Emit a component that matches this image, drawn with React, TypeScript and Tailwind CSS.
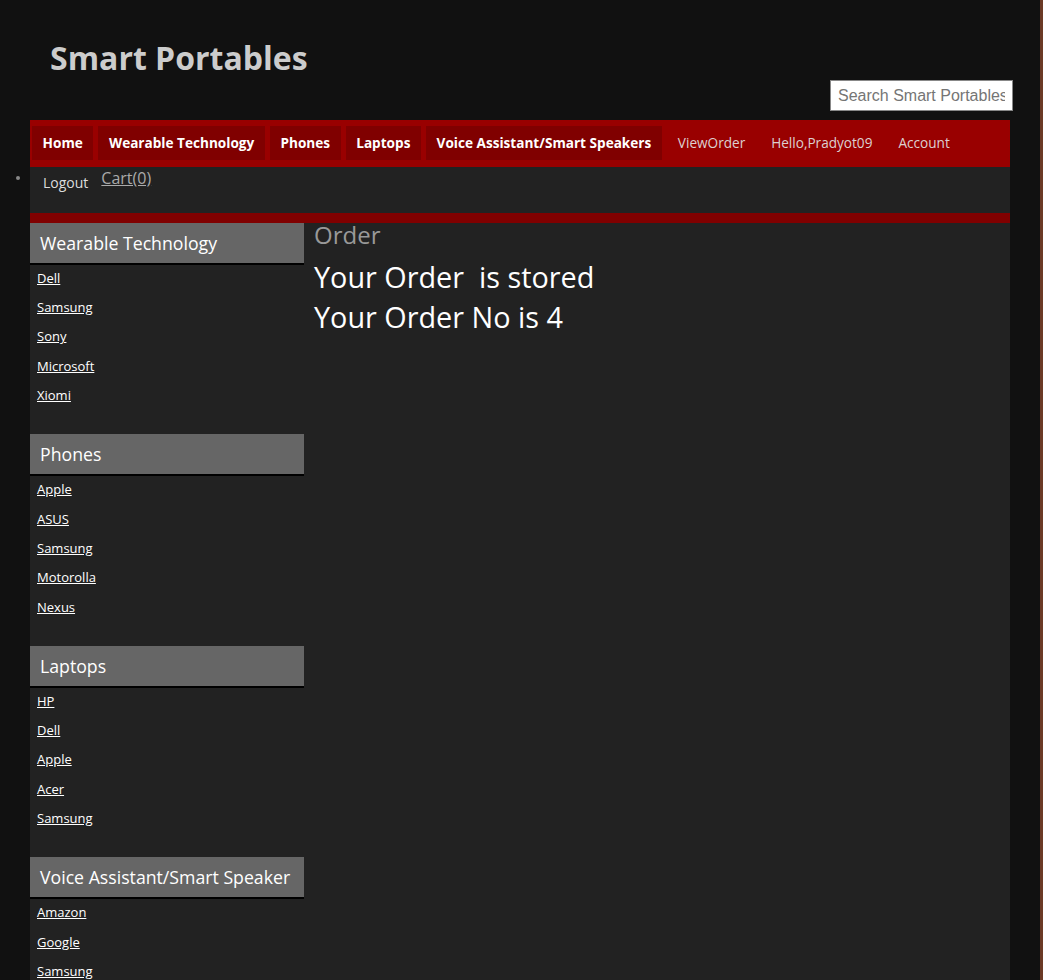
const font = { fontFamily: '"Open Sans", "Noto Sans", sans-serif' }

const navBold = ['Home', 'Wearable Technology', 'Phones', 'Laptops', 'Voice Assistant/Smart Speakers']
const navPlain = ['ViewOrder', 'Hello,Pradyot09', 'Account']

const sections = [
  { title: 'Wearable Technology', links: ['Dell', 'Samsung', 'Sony', 'Microsoft', 'Xiomi'] },
  { title: 'Phones', links: ['Apple', 'ASUS', 'Samsung', 'Motorolla', 'Nexus'] },
  { title: 'Laptops', links: ['HP', 'Dell', 'Apple', 'Acer', 'Samsung'] },
  { title: 'Voice Assistant/Smart Speaker', links: ['Amazon', 'Google', 'Samsung'] },
]

export default function App() {
  return (
    <div className="h-[980px] overflow-hidden bg-[#111111] flex" style={font}>
      <div className="flex-1 relative">
        <header className="h-[120px] relative">
          <h1 className="absolute left-[50px] top-[36px] text-[32px] font-bold text-[#cccccc] leading-[44px]">
            Smart Portables
          </h1>
          <input
            type="text"
            placeholder="Search Smart Portables"
            className="absolute left-[830px] top-[80px] w-[183px] h-[31px] bg-white border border-[#888] px-[7px] text-[16px] text-[#555] placeholder:text-[#757575] outline-none"
            style={{ fontFamily: '"Liberation Sans", Arial, sans-serif' }}
          />
        </header>

        <div className="ml-[30px] w-[980px] bg-[#222222] h-[860px]">
          <nav className="h-[47px] bg-[#990000] flex items-start pt-[6px] pl-[2px] gap-[5px]">
            {navBold.map((n) => (
              <a
                key={n}
                className="h-[34px] px-[10.6px] flex items-center bg-[#800000] text-white text-[13.6px] font-bold"
              >
                {n}
              </a>
            ))}
            <div className="flex -ml-[2px]">
              {navPlain.map((n) => (
                <a key={n} className="h-[34px] px-[13px] flex items-center text-[#ddd0d0] text-[13.6px]">
                  {n}
                </a>
              ))}
            </div>
          </nav>

          <div className="h-[46px] relative flex items-start">
            <span className="absolute -left-[14px] top-[9px] w-[4px] h-[4px] rounded-full bg-[#888]" />
            <span className="ml-[13px] mt-[3px] text-[14px] text-[#dddddd] leading-[20px] pt-[3px]">Logout</span>
            <a className="ml-[13px] mt-0 text-[16px] text-[#aaaaaa] underline leading-[22px]">Cart(0)</a>
          </div>

          <div className="h-[10px] bg-[#800000]" />

          <div className="flex">
            <aside className="w-[274px] shrink-0">
              {sections.map((s) => (
                <div key={s.title} className="mb-[13px]">
                  <h2 className="h-[40px] bg-[#666666] text-white text-[17.7px] pl-[10px] flex items-center shadow-[0_2px_0_#000]">
                    {s.title}
                  </h2>
                  <ul className="pt-[1px] pb-[11px]">
                    {s.links.map((l, i) => (
                      <li key={s.title + l + i} className="h-[29.3px] pl-[7px] flex items-center">
                        <a className="text-[13px] text-white underline">{l}</a>
                      </li>
                    ))}
                  </ul>
                </div>
              ))}
            </aside>

            <main className="pl-[10px]">
              <h3 className="text-[24px] text-[#999999] leading-[26px] -mt-[1px]">Order</h3>
              <p className="text-[28.8px] text-white leading-[40px] mt-[9px] whitespace-pre">Your Order  is stored</p>
              <p className="text-[28.8px] text-white leading-[40px]">Your Order No is 4</p>
            </main>
          </div>
        </div>
      </div>
      <div className="w-[3px] bg-[#6b3a26]" />
    </div>
  )
}
